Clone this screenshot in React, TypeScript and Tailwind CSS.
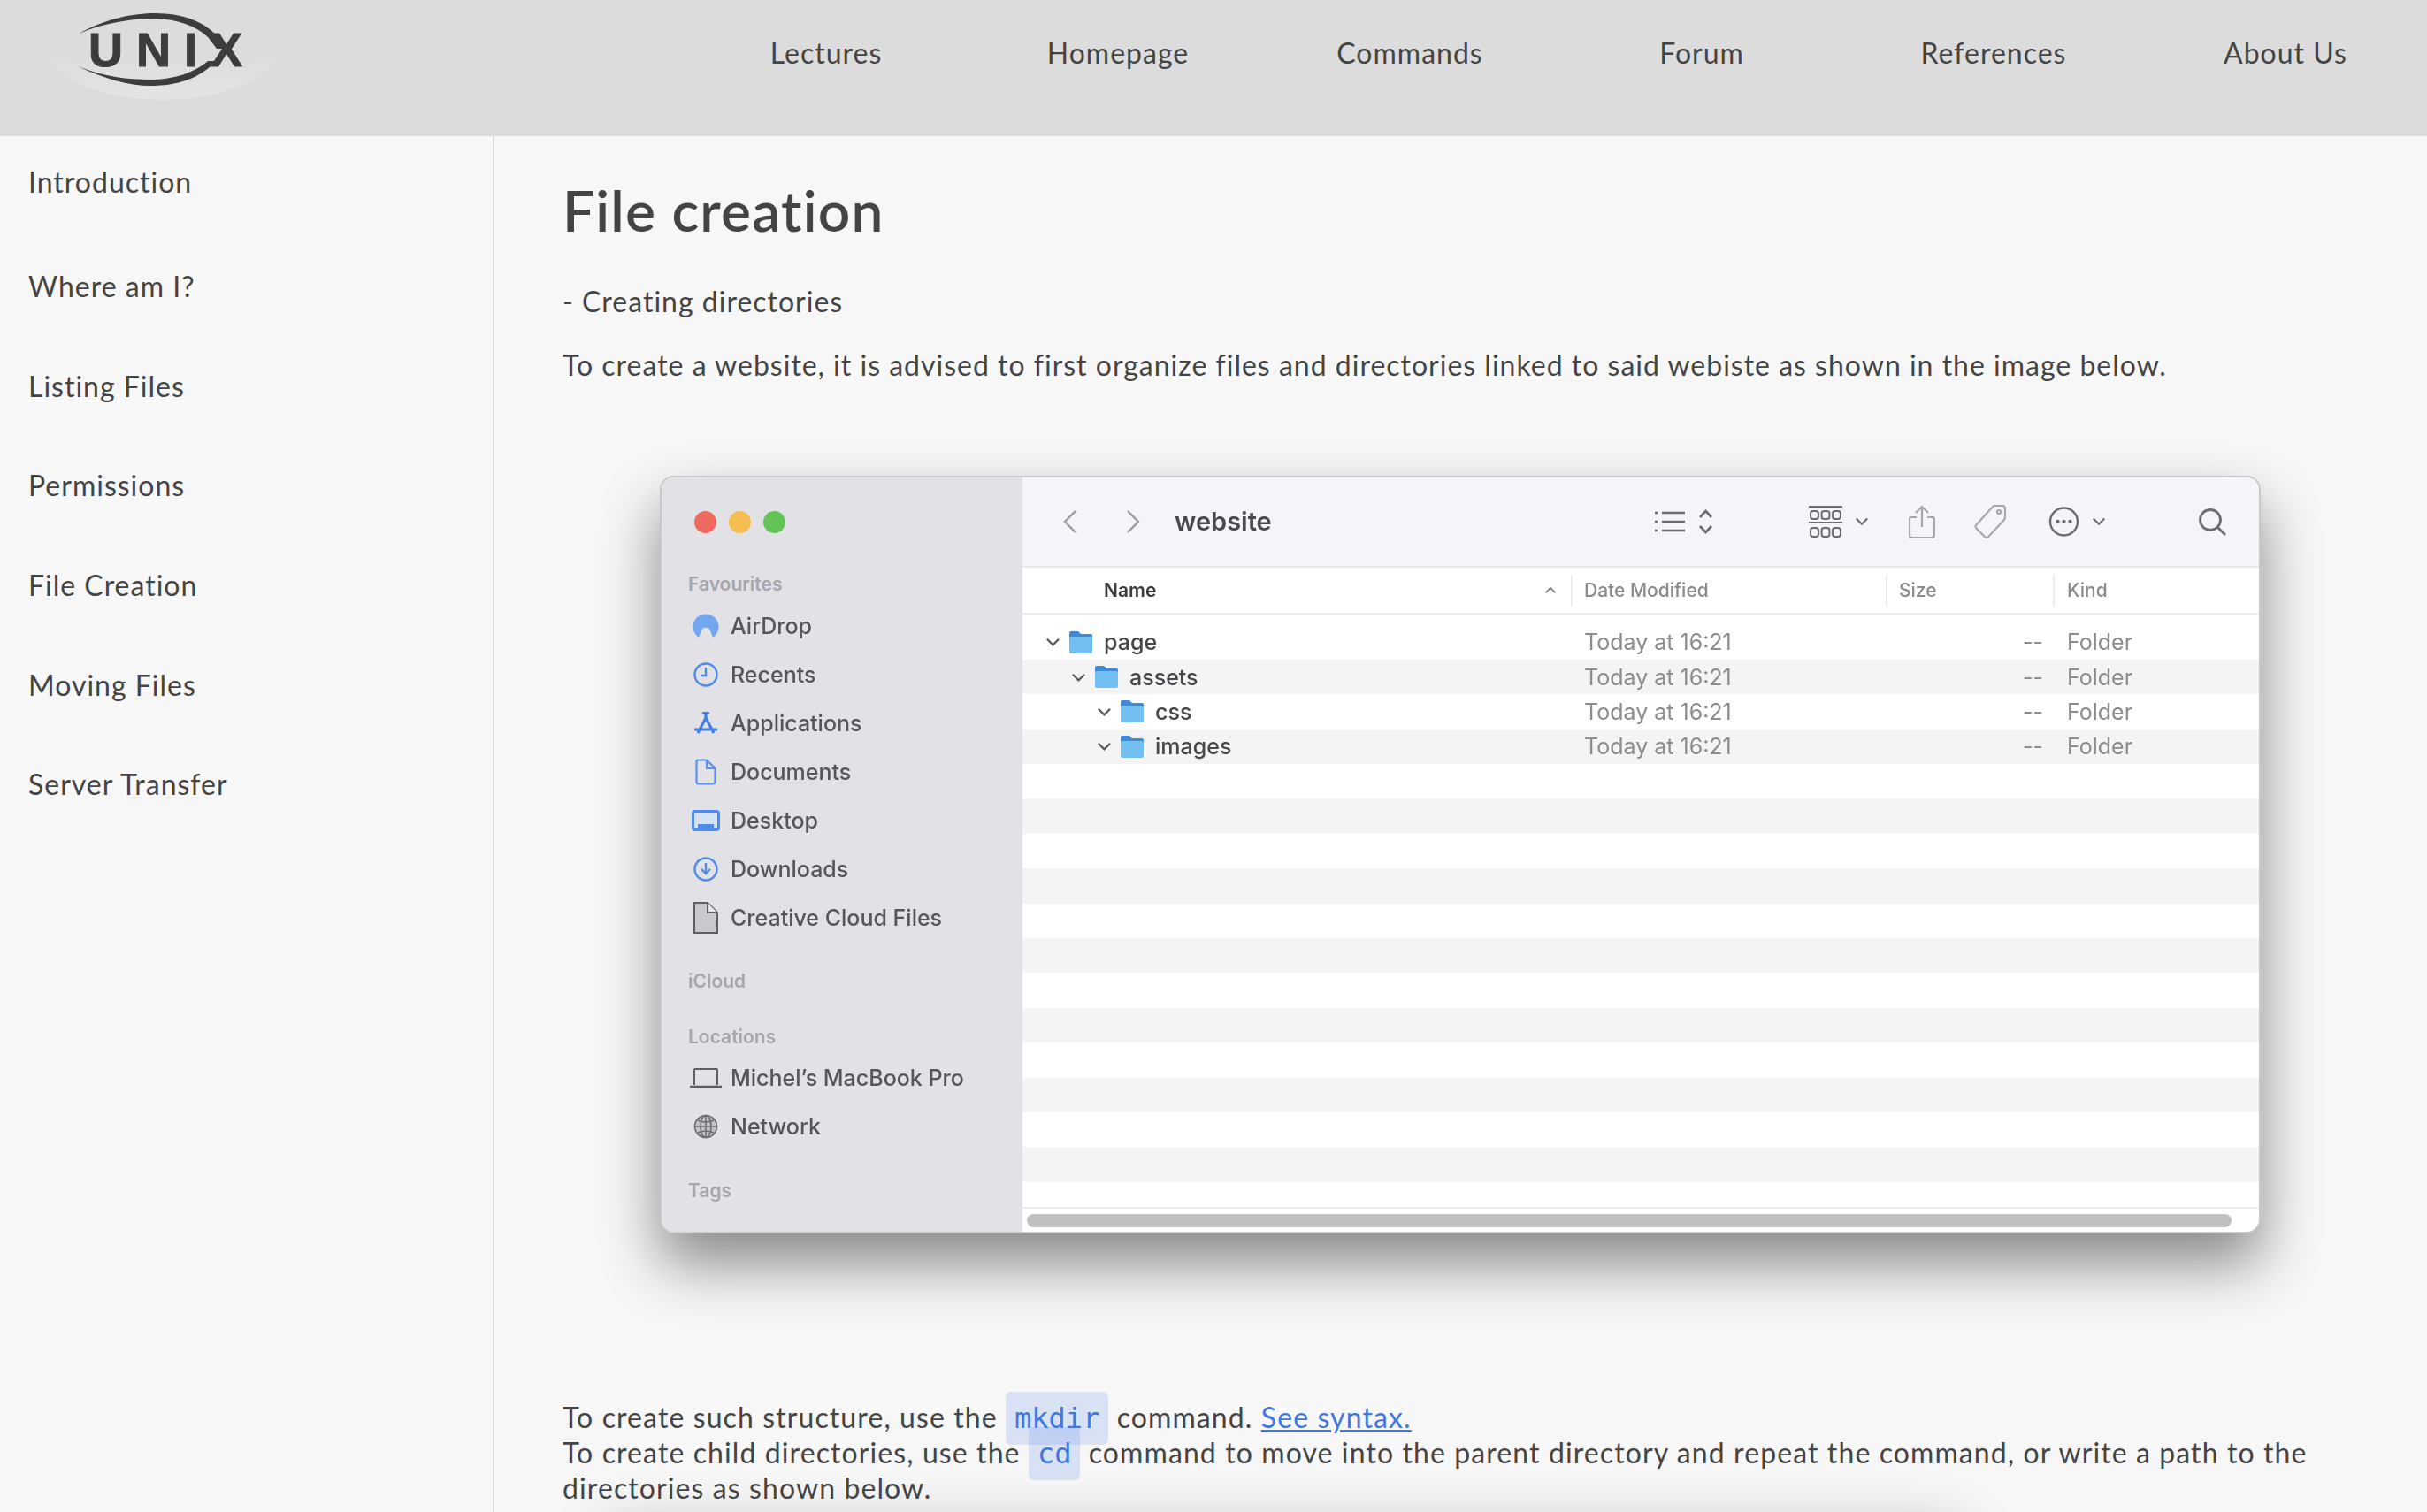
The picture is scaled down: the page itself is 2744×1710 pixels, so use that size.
const navItems = ['Lectures', 'Homepage', 'Commands', 'Forum', 'References', 'About Us']

const sideLinks = ['Where am I?', 'Listing Files', 'Permissions', 'File Creation', 'Moving Files', 'Server Transfer']

const tree = [
  { name: 'page', indent: 0 },
  { name: 'assets', indent: 29 },
  { name: 'css', indent: 58 },
  { name: 'images', indent: 58 },
]

function Logo() {
  return (
    <svg width="340" height="130" viewBox="0 0 340 130" className="mt-[-3px]">
      <defs>
        <linearGradient id="glow" x1="0" y1="0" x2="0" y2="1">
          <stop offset="0" stopColor="#dcdcdc" />
          <stop offset="1" stopColor="#e4e4e4" />
        </linearGradient>
      </defs>
      <path d="M49 62 C70 100 130 116 186 116 C245 116 300 95 321 62 C260 78 110 78 49 62 Z" fill="url(#glow)" />
      <text x="100" y="78" fill="#3c3c3c" stroke="#3c3c3c" strokeWidth="1" fontFamily="Liberation Sans" fontWeight="700" fontSize="54" letterSpacing="10" textLength="184">
        UNIX
      </text>
      <path d="M89 41 C120 24 150 18 176 18 C205 18 228 26 244 42 L253 58 L245 58 L235 45 C220 31 200 25 176 24 C150 24 120 28 89 41 Z" fill="#3c3c3c" />
      <path d="M88 78 C118 92 145 100 170 100 C200 100 226 92 244 72 L235 72 C220 85 197 93 170 93 C145 93 118 90 88 78 Z" fill="#3c3c3c" />
    </svg>
  )
}

function Chevron({ dir, className }: { dir: 'left' | 'right' | 'down' | 'up'; className?: string }) {
  const d = { left: 'M16 2 L4 14 L16 26', right: 'M4 2 L16 14 L4 26', down: 'M2 5 L9 12 L16 5', up: 'M2 12 L9 5 L16 12' }[dir]
  const box = dir === 'left' || dir === 'right' ? '0 0 20 28' : '0 0 18 17'
  return (
    <svg viewBox={box} fill="none" stroke="currentColor" strokeWidth="2.4" className={className}>
      <path d={d} />
    </svg>
  )
}

function Folder() {
  return (
    <svg width="28" height="27" viewBox="0 0 28 27" className="shrink-0">
      <path d="M1 3 Q1 1 3 1 H11 L14 4 H25 Q27 4 27 6 V9 H1 Z" fill="#3d8bd4" />
      <rect x="1" y="7" width="26" height="19" rx="2" fill="#74bff1" />
    </svg>
  )
}

function AirDropIcon() {
  return (
    <svg width="30" height="30" viewBox="0 0 30 30">
      <path d="M7 28 A14.5 14.5 0 1 1 23 28 L20 20 A5.5 5.5 0 0 0 10 20 Z" fill="#73a7f0" />
    </svg>
  )
}

function RecentsIcon() {
  return (
    <svg width="28" height="28" viewBox="0 0 28 28" fill="none" stroke="#4f8bea" strokeWidth="2.4">
      <circle cx="14" cy="14" r="12.5" />
      <path d="M14 6 V15 H8" />
    </svg>
  )
}

function AppsIcon() {
  return (
    <svg width="28" height="26" viewBox="0 0 28 26" fill="none" stroke="#3f7fe8" strokeWidth="3.2">
      <path d="M14 7 L5 24 M14 7 L23 24 M10 1 H18 M14 1 V7 M1 20 H27" />
    </svg>
  )
}

function DocIcon() {
  return (
    <svg width="24" height="30" viewBox="0 0 24 30" fill="none" stroke="#5a92ec" strokeWidth="2.2">
      <path d="M3 1.5 H13 L22.5 11 V26 Q22.5 28.5 20 28.5 H4 Q1.5 28.5 1.5 26 V3 Q1.5 1.5 3 1.5 Z M13 1.5 V11 H22.5" />
    </svg>
  )
}

function DesktopIcon() {
  return (
    <svg width="32" height="24" viewBox="0 0 32 24">
      <rect width="32" height="24" rx="4" fill="#4f8bea" />
      <rect x="3" y="4" width="26" height="12" fill="#d6e2f6" />
      <rect x="3" y="16" width="4" height="4" fill="#d6e2f6" />
      <rect x="25" y="16" width="4" height="4" fill="#d6e2f6" />
    </svg>
  )
}

function DownloadIcon() {
  return (
    <svg width="28" height="28" viewBox="0 0 28 28" fill="none" stroke="#4f8bea" strokeWidth="2.4">
      <circle cx="14" cy="14" r="12.5" />
      <path d="M14 7 V19 M9 14 L14 19 L19 14" />
    </svg>
  )
}

function FileIcon() {
  return (
    <svg width="30" height="38" viewBox="0 0 30 38" fill="#c9c9cd" stroke="#5f5f63" strokeWidth="2">
      <path d="M2 2 H17 L28 13 V36 H2 Z" />
      <path d="M17 2 V13 H28" fill="#e6e6ea" />
    </svg>
  )
}

function LaptopIcon() {
  return (
    <svg width="36" height="24" viewBox="0 0 36 24" fill="none" stroke="#5f5f63" strokeWidth="2">
      <path d="M5 20 V3 Q5 2 6 2 H30 Q31 2 31 3 V20" />
      <path d="M0 22 H36" strokeWidth="2.6" />
    </svg>
  )
}

function GlobeIcon() {
  return (
    <svg width="28" height="28" viewBox="0 0 28 28" fill="#8a8a8e" stroke="#6d6d71" strokeWidth="1.6">
      <circle cx="14" cy="14" r="12.5" fillOpacity="0.35" />
      <path d="M14 2 V26 M2 14 H26 M5 7 Q14 11 23 7 M5 21 Q14 17 23 21" fill="none" />
      <ellipse cx="14" cy="14" rx="6" ry="12.5" fill="none" />
    </svg>
  )
}

function SideItem({ icon, label }: { icon: React.ReactNode; label: string }) {
  return (
    <div className="flex h-[55px] items-center pl-[27px]">
      <span className="mr-[5px] flex w-[46px] justify-center">{icon}</span>
      <span className="text-[25px] font-medium text-[#55555a]">{label}</span>
    </div>
  )
}

function SideTitle({ children, className }: { children: string; className: string }) {
  return <div className={`pl-[30px] text-[21px] leading-[30px] font-semibold text-[#a6a6ac] ${className}`}>{children}</div>
}

function FinderWindow() {
  return (
    <div className="ml-[110px] mt-[105px] h-[857px] w-[1810px] rounded-[16px] border-2 border-[#c8c8c8] bg-white tracking-normal shadow-[0_34px_66px_rgba(0,0,0,0.45)]">
      <div className="flex h-full overflow-hidden rounded-[14px] font-['Inter',sans-serif] blur-[0.7px]">
        <aside className="w-[408px] shrink-0 bg-[#e1e1e6] pt-[38px]">
          <div className="flex gap-[14px] pl-[37px]">
            <span className="size-[25px] rounded-full bg-[#ee6a5f]" />
            <span className="size-[25px] rounded-full bg-[#f5bd4f]" />
            <span className="size-[25px] rounded-full bg-[#61c454]" />
          </div>
          <SideTitle className="mt-[43px] mb-[4px]">Favourites</SideTitle>
          <SideItem icon={<AirDropIcon />} label="AirDrop" />
          <SideItem icon={<RecentsIcon />} label="Recents" />
          <SideItem icon={<AppsIcon />} label="Applications" />
          <SideItem icon={<DocIcon />} label="Documents" />
          <SideItem icon={<DesktopIcon />} label="Desktop" />
          <SideItem icon={<DownloadIcon />} label="Downloads" />
          <SideItem icon={<FileIcon />} label="Creative Cloud Files" />
          <SideTitle className="mt-[30px]">iCloud</SideTitle>
          <SideTitle className="mt-[33px] mb-[3px]">Locations</SideTitle>
          <SideItem icon={<LaptopIcon />} label="Michel’s MacBook Pro" />
          <SideItem icon={<GlobeIcon />} label="Network" />
          <SideTitle className="mt-[31px]">Tags</SideTitle>
        </aside>

        <div className="flex min-w-0 flex-1 flex-col">
          <div className="flex h-[102px] shrink-0 items-center border-b-2 border-[#e8e8ec] bg-[#f4f4f9] pr-[36px] text-[#6c6c70]">
            <Chevron dir="left" className="ml-[44px] h-[30px] w-[20px] text-[#9c9ca0]" />
            <Chevron dir="right" className="ml-[51px] h-[30px] w-[20px] text-[#9c9ca0]" />
            <span className="ml-[37px] text-[29px] font-semibold text-[#4a4a4e]">website</span>

            <svg width="34" height="26" viewBox="0 0 34 26" fill="none" stroke="currentColor" strokeWidth="2.4" className="ml-auto">
              <path d="M8 3 H34 M8 13 H34 M8 23 H34 M0 3 H3 M0 13 H3 M0 23 H3" />
            </svg>
            <svg width="17" height="30" viewBox="0 0 17 30" fill="none" stroke="currentColor" strokeWidth="2.6" className="ml-[15px]">
              <path d="M2 10 L8.5 3 L15 10 M2 20 L8.5 27 L15 20" />
            </svg>
            <svg width="38" height="38" viewBox="0 0 38 38" fill="none" stroke="currentColor" strokeWidth="2" className="ml-[108px]">
              <path d="M0 2 H38 M0 20 H38" />
              <rect x="2" y="7" width="9" height="9" rx="3" />
              <rect x="14.5" y="7" width="9" height="9" rx="3" />
              <rect x="27" y="7" width="9" height="9" rx="3" />
              <rect x="2" y="26" width="9" height="10" rx="3" />
              <rect x="14.5" y="26" width="9" height="10" rx="3" />
              <rect x="27" y="26" width="9" height="10" rx="3" />
            </svg>
            <Chevron dir="down" className="ml-[14px] w-[16px]" />
            <svg width="30" height="38" viewBox="0 0 30 38" fill="none" stroke="#a8a8ac" strokeWidth="2.2" className="ml-[45px]">
              <path d="M9 14 H3 Q1 14 1 16 V34 Q1 37 4 37 H26 Q29 37 29 34 V16 Q29 14 27 14 H21 M15 25 V2 M8 9 L15 2 L22 9" />
            </svg>
            <svg width="36" height="38" viewBox="0 0 36 38" fill="none" stroke="#a8a8ac" strokeWidth="2.2" className="ml-[44px]">
              <path d="M2 23 L21 2 Q22 1 24 1 H32 Q35 1 35 4 V14 Q35 16 33 18 L16 36 Q14 38 12 36 L2 26 Q1 24 2 23 Z" />
              <circle cx="28" cy="8" r="2" />
            </svg>
            <svg width="35" height="34" viewBox="0 0 35 34" fill="none" stroke="currentColor" strokeWidth="2.4" className="ml-[48px]">
              <circle cx="17.5" cy="17" r="15.5" />
              <circle cx="10.5" cy="17" r="1" fill="currentColor" />
              <circle cx="17.5" cy="17" r="1" fill="currentColor" />
              <circle cx="24.5" cy="17" r="1" fill="currentColor" />
            </svg>
            <Chevron dir="down" className="ml-[14px] w-[16px]" />
            <svg width="33" height="33" viewBox="0 0 33 33" fill="none" stroke="currentColor" strokeWidth="2.8" className="ml-[104px]">
              <circle cx="14" cy="14" r="11.5" />
              <path d="M22 22 L31 31" />
            </svg>
          </div>

          <div className="flex h-[53px] shrink-0 items-center border-b-2 border-[#ececec] text-[21px] font-medium text-[#8b8b8f]">
            <div className="flex w-[620px] items-center pl-[92px] pr-[16px]">
              <span className="font-semibold text-[#3c3c40]">Name</span>
              <Chevron dir="up" className="ml-auto w-[14px] text-[#88888c]" />
            </div>
            <div className="flex h-[36px] w-[356px] items-center border-l-2 border-[#ececec] pl-[13px]">Date Modified</div>
            <div className="flex h-[36px] w-[189px] items-center border-l-2 border-[#ececec] pl-[13px]">Size</div>
            <div className="flex h-[36px] items-center border-l-2 border-[#ececec] pl-[14px]">Kind</div>
          </div>

          <div className="min-h-0 flex-1 overflow-hidden pt-[11.5px] text-[25px]">
            {Array.from({ length: 17 }).map((_, i) => (
              <div key={i} className={`flex h-[39.4px] items-center ${i % 2 === 1 ? 'bg-[#f4f4f5]' : 'bg-white'}`}>
                {tree[i] && (
                  <>
                    <div className="flex w-[620px] items-center font-medium text-[#47474b]" style={{ paddingLeft: 26 + tree[i].indent }}>
                      <Chevron dir="down" className="mr-[9px] w-[17px] shrink-0 text-[#5a5a5e]" />
                      <Folder />
                      <span className="ml-[12px]">{tree[i].name}</span>
                    </div>
                    <div className="w-[356px] pl-[15px] text-[#8c8c90]">Today at 16:21</div>
                    <div className="w-[189px] pr-[11px] text-right text-[#8c8c90]">--</div>
                    <div className="pl-[16px] text-[#8c8c90]">Folder</div>
                  </>
                )}
              </div>
            ))}
          </div>

          <div className="h-[28px] shrink-0 border-t-2 border-[#ececec] px-[5px] pt-[6px]">
            <div className="h-[15px] w-[1362px] rounded-full bg-[#c0c0c0]" />
          </div>
        </div>
      </div>
    </div>
  )
}

function Code({ children }: { children: string }) {
  return (
    <code className="rounded-[6px] bg-[rgba(70,120,230,0.17)] px-[10px] py-[11px] font-['DejaVu_Sans_Mono',monospace] text-[32px] leading-[30px] tracking-normal text-[#3f78e0]">
      {children}
    </code>
  )
}

function App() {
  return (
    <div className="flex h-screen flex-col overflow-hidden bg-[#f7f7f7] font-['Lato',sans-serif] text-[32px] leading-[40px] tracking-[1px] text-[#444]">
      <header className="flex h-[154px] shrink-0 bg-[#dcdcdc]">
        <div className="w-[769px] shrink-0">
          <Logo />
        </div>
        <nav className="grid flex-1 grid-cols-[repeat(6,330px)] items-center pb-[34px] text-center">
          {navItems.map(item => (
            <a key={item}>{item}</a>
          ))}
        </nav>
      </header>

      <div className="flex min-h-0 flex-1">
        <aside className="w-[559px] shrink-0 border-r-2 border-[#dddddd] pl-[32px] pt-[32px]">
          <div>Introduction</div>
          <ul className="mt-[78px] flex flex-col gap-[72.7px]">
            {sideLinks.map(link => (
              <li key={link}>{link}</li>
            ))}
          </ul>
        </aside>

        <main className="min-w-0 flex-1 pl-[77px] pr-[75px] pt-[44px]">
          <h1 className="text-[64px] leading-[80px] font-semibold tracking-[1.2px]">File creation</h1>
          <p className="mt-[43px]">- Creating directories</p>
          <p className="mt-[32px]">To create a website, it is advised to first organize files and directories linked to said webiste as shown in the image below.</p>

          <FinderWindow />

          <p className="mt-[188px] tracking-[1.1px]">
            To create such structure, use the <Code>mkdir</Code> command.{' '}
            <a className="text-[#3f78e0] underline">See syntax.</a>
            <br />
            To create child directories, use the <Code>cd</Code> command to move into the parent directory and repeat the command, or write a path to the directories as shown below.
          </p>

          <div className="ml-[50px] mt-[30px] h-[400px] w-[1530px] bg-[#f7f7f7] shadow-[0_0_60px_rgba(0,0,0,0.3)]" />
        </main>
      </div>
    </div>
  )
}

export default App
